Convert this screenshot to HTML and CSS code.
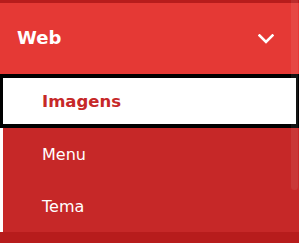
FILE: index.html
```html
<!DOCTYPE html>
<html lang="pt">
<head>
  <meta charset="UTF-8">
  <meta name="viewport" content="width=device-width, initial-scale=1.0">
  <title>Menu</title>
  <link rel="stylesheet" href="styles.css">
</head>
<body>
  <div class="menu">
    <div class="menu-header">
      <span class="menu-title">Web</span>
      <svg class="chevron" width="16" height="10" viewBox="0 0 16 10">
        <polyline points="1.5,1.5 8,8 14.5,1.5" fill="none" stroke="#fff" stroke-width="2.6" stroke-linecap="square"/>
      </svg>
    </div>
    <ul class="submenu">
      <li class="item active">Imagens</li>
      <li class="item">Menu</li>
      <li class="item">Tema</li>
    </ul>
    <div class="menu-footer"></div>
    <div class="scroll-thumb"></div>
  </div>
</body>
</html>
```

FILE: styles.css
```css
body {
  margin: 0;
  font-family: "DejaVu Sans", Verdana, sans-serif;
}

.menu {
  position: relative;
  width: 299px;
  height: 243px;
  background-color: #b71c1c;
  padding-top: 3px;
  box-sizing: border-box;
  overflow: hidden;
}

.menu-header {
  height: 71px;
  background-color: #e53935;
  display: flex;
  align-items: center;
  justify-content: space-between;
  padding: 0 25px 0 17px;
  box-sizing: border-box;
}

.menu-title {
  color: #fff;
  font-weight: bold;
  font-size: 18px;
  margin-top: -3px;
}

.chevron {
  display: block;
}

.submenu {
  list-style: none;
  margin: 0;
  padding: 0;
  background-color: #fff;
}

.item {
  height: 52px;
  margin-left: 3px;
  padding-left: 39px;
  background-color: #c62828;
  color: #fff;
  font-size: 16px;
  display: flex;
  align-items: center;
  box-sizing: border-box;
}

.item.active {
  margin-left: 0;
  height: 54px;
  padding-left: 39px;
  background-color: #fff;
  color: #c62828;
  font-weight: bold;
  font-size: 16.5px;
  border: 4px solid #000;
  border-left-width: 3px;
  border-right-width: 3px;
}

.menu-footer {
  height: 12px;
  background-color: #b71c1c;
}

.scroll-thumb {
  position: absolute;
  top: 0;
  left: 291px;
  width: 7px;
  height: 190px;
  border-radius: 0 0 4px 4px;
  background-color: rgba(255, 255, 255, 0.08);
}
```
